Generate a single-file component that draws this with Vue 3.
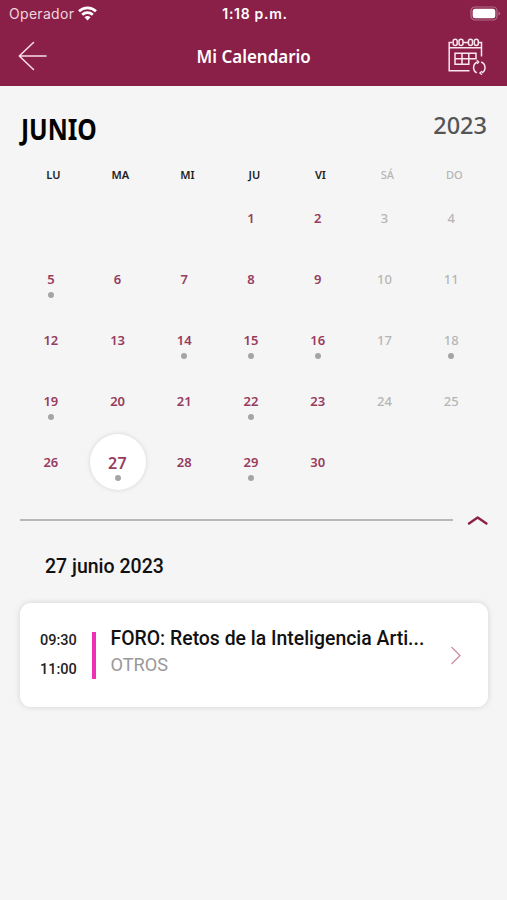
<template>
  <div class="screen">
    <header class="top">
      <div class="status">
        <div class="carrier">
          <span>Operador</span>
          <svg width="19" height="15" viewBox="0 0 19 15" fill="none" stroke="#fff" stroke-width="2.7">
            <path d="M1 5.3C5.8.7 13.2.7 18 5.3" />
            <path d="M4.2 8.8C7.2 6 11.8 6 14.8 8.8" />
            <path d="M6.5 11.2C8.2 9.6 10.8 9.6 12.5 11.2L9.5 14.4Z" fill="#fff" stroke="none" />
          </svg>
        </div>
        <span class="clock">1:18 p.m.</span>
        <svg class="battery" width="31" height="15" viewBox="0 0 31 15">
          <rect x="1" y="1" width="26" height="13" rx="4" fill="none" stroke="#b06f89" stroke-width="1.2" />
          <rect x="2.7" y="2.7" width="22.6" height="9.6" rx="2.5" fill="#fff" />
          <path d="M28.5 5.2L30.5 7.5L28.5 9.8Z" fill="#b06f89" />
        </svg>
      </div>
      <div class="nav">
        <svg class="back" width="30" height="30" viewBox="0 0 30 30" fill="none" stroke="#f6dbe5" stroke-width="1.6" stroke-linecap="round" stroke-linejoin="round">
          <path d="M15.5 1.5L1.3 15L15.5 28.5M1.3 15H28" />
        </svg>
        <h1>Mi Calendario</h1>
        <svg class="sync" width="40" height="38" viewBox="0 0 40 38" fill="none" stroke="#fbe6ee" stroke-width="1.5">
          <path d="M4.5 5.5H1.2V33.8H21.5M33.5 19.5V5.5H31M15 5.5H20.5M1.2 10.8H33.5" />
          <rect x="5.2" y="2.3" width="4" height="6.2" rx="2" />
          <rect x="11" y="2.3" width="4" height="6.2" rx="2" />
          <rect x="20.5" y="2.3" width="4" height="6.2" rx="2" />
          <rect x="26.3" y="2.3" width="4" height="6.2" rx="2" />
          <path d="M7 16.3H28V21.8H7ZM7 21.8V27.2H20.8V16.3M14 16.3V27.2" />
          <path d="M29.4 25A6 6 0 0 0 28.8 35.9M33.2 25A6 6 0 0 1 33.8 35.9" />
          <path d="M28.8 23.3L30.8 25L29 26.8M33.9 34.1L31.8 36L34 37.7" stroke-width="1.2" />
        </svg>
      </div>
    </header>

    <section class="calendar">
      <div class="heading">
        <h2>JUNIO</h2>
        <span class="year">2023</span>
      </div>
      <div class="week names">
        <span v-for="(name, i) in weekdays" :key="name" :class="{ weekend: i > 4 }">{{ name }}</span>
      </div>
      <div class="week days">
        <div
          v-for="(day, i) in cells"
          :key="i"
          class="day"
          :class="{ weekend: i % 7 > 4, selected: day === selected }"
          @click="selectDay(day)"
        >
          <div v-if="day" class="bubble">
            <span class="number">{{ day }}</span>
            <i v-if="events.includes(day)" class="dot"></i>
          </div>
        </div>
      </div>
      <div class="divider">
        <div class="line"></div>
        <svg width="21" height="11" viewBox="0 0 21 11" fill="none" stroke="#8a2047" stroke-width="2.4" stroke-linecap="round" stroke-linejoin="round">
          <path d="M2 8.5L10.7 2.5L19.4 8.5" />
        </svg>
      </div>
    </section>

    <section class="agenda">
      <h3>{{ selected }} junio 2023</h3>
      <article class="card">
        <div class="hours">
          <span>09:30</span>
          <span>11:00</span>
        </div>
        <div class="bar"></div>
        <div class="info">
          <p class="title">FORO: Retos de la Inteligencia Arti...</p>
          <p class="type">OTROS</p>
        </div>
        <svg width="12" height="20" viewBox="0 0 12 20" fill="none" stroke="#c98fa5" stroke-width="1.3">
          <path d="M1.5 2L10 10.5L1.5 19" />
        </svg>
      </article>
    </section>
  </div>
</template>

<script setup>
import { ref } from 'vue'

const weekdays = ['LU', 'MA', 'MI', 'JU', 'VI', 'SÁ', 'DO']
const events = [5, 14, 15, 16, 18, 19, 22, 27, 29]
const selected = ref(27)

// junio 2023 empieza en jueves
const cells = [null, null, null, ...Array.from({ length: 30 }, (_, i) => i + 1)]

function selectDay(day) {
  if (day) selected.value = day
}
</script>

<style>
body {
  margin: 0;
  background: #f5f5f5;
}
</style>

<style scoped>
.screen {
  height: 900px;
  overflow: hidden;
  background: #f5f5f5;
  font-family: 'Noto Sans', 'Open Sans', sans-serif;
}
h1,
h2,
h3,
p {
  margin: 0;
}
svg {
  display: block;
  flex: none;
}
.top {
  height: 86px;
  background: #8a2047;
  color: #fff;
}
.status {
  display: grid;
  grid-template-columns: 1fr auto 1fr;
  align-items: center;
  height: 27px;
  padding: 0 6px 0 9px;
  font-family: Inter, sans-serif;
  font-size: 14px;
}
.carrier {
  display: flex;
  align-items: center;
  gap: 4px;
  color: #f1d5df;
  letter-spacing: 0.3px;
}
.clock {
  font-weight: 600;
  letter-spacing: 0.7px;
}
.battery {
  justify-self: end;
}
.nav {
  display: grid;
  grid-template-columns: 1fr auto 1fr;
  align-items: center;
  height: 58px;
  padding: 0 19px 0 18px;
}
h1 {
  padding-left: 2px;
  font-size: 18px;
  line-height: 28px;
  font-weight: 600;
  transform: scaleX(0.94);
}
.sync {
  justify-self: end;
}
.calendar {
  padding: 23px 19px 0 20px;
}
.heading {
  display: flex;
  justify-content: space-between;
  height: 54px;
}
h2 {
  padding-left: 1px;
  font-size: 28px;
  line-height: 41px;
  font-weight: 700;
  color: #000;
  transform: scaleX(0.88);
  transform-origin: left;
}
.year {
  padding-right: 1px;
  font-size: 23.5px;
  line-height: 33px;
  font-weight: 500;
  color: #555;
}
.week {
  display: grid;
  grid-template-columns: repeat(7, 1fr);
  text-align: center;
}
.names {
  height: 24px;
  font-size: 11.5px;
  line-height: 24px;
  font-weight: 600;
  color: #222;
}
.names .weekend {
  font-weight: 500;
  color: #b5b5b5;
}
.names span {
  transform: scaleX(0.96);
}
.days {
  grid-auto-rows: 61px;
  margin: 0 3.5px 0 -2.5px;
}
.day {
  display: flex;
  align-items: center;
  justify-content: center;
  color: #963c5e;
}
.day.weekend {
  color: #b5b5b5;
}
.bubble {
  display: flex;
  flex-direction: column;
  align-items: center;
  box-sizing: border-box;
  width: 56px;
  height: 56px;
  padding-top: 18px;
  border-radius: 50%;
}
.number {
  font-size: 13px;
  line-height: 20px;
  font-weight: 600;
}
.weekend .number {
  font-weight: 500;
}
.dot {
  width: 6px;
  height: 6px;
  margin-top: 3px;
  border-radius: 50%;
  background: #a5a5a5;
}
.selected .bubble {
  background: #fff;
  box-shadow: 0 0 5px rgba(0, 0, 0, 0.13);
}
.selected .number {
  font-size: 16px;
  line-height: 22px;
  letter-spacing: 0.5px;
}
.selected .dot {
  margin-top: 1px;
}
.divider {
  display: flex;
  align-items: center;
  justify-content: space-between;
  height: 56px;
}
.line {
  width: 433px;
  height: 1.5px;
  background: #b8b8b8;
}
.agenda {
  padding: 0 19px 0 20px;
  font-family: Roboto, sans-serif;
}
h3 {
  height: 55px;
  padding-left: 25px;
  font-size: 19.5px;
  line-height: 38px;
  font-weight: 500;
  color: #111;
}
.card {
  display: flex;
  align-items: center;
  box-sizing: border-box;
  height: 104px;
  padding: 0 26px 0 20px;
  border-radius: 11px;
  background: #fff;
  box-shadow: 0 0 6px rgba(0, 0, 0, 0.14);
}
.hours {
  display: flex;
  flex-direction: column;
  gap: 9px;
  width: 52px;
  padding-top: 1px;
  font-size: 14.5px;
  line-height: 20px;
  font-weight: 500;
  color: #222;
}
.bar {
  width: 4px;
  height: 47px;
  background: #ee30b4;
}
.info {
  flex: 1;
  padding-left: 14.5px;
  margin-top: -7px;
  white-space: nowrap;
}
.title {
  font-size: 19.4px;
  line-height: 26px;
  font-weight: 500;
  color: #111;
}
.type {
  font-size: 18.2px;
  line-height: 26px;
  color: #999;
}
</style>
